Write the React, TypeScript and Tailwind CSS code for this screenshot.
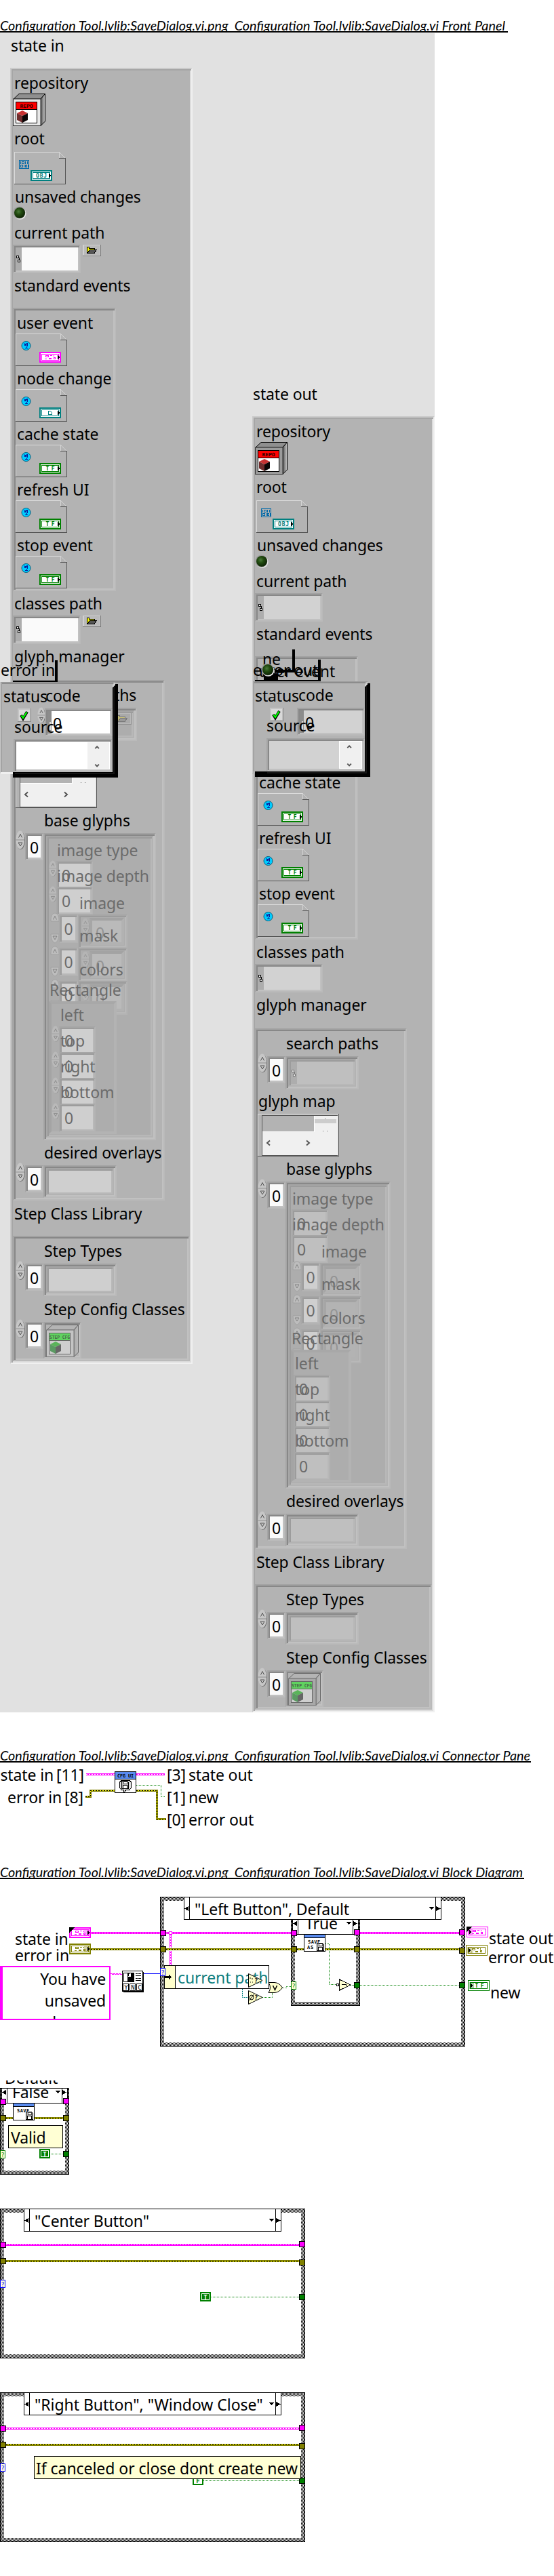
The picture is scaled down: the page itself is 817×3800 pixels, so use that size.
import React from 'react'

const SUNK =
  'border-2 border-t-[#a2a2a2] border-l-[#a5a5a5] border-r-[#bababa] border-b-[#bababa] p-[2px] shadow-[inset_2px_2px_0_#888888,inset_-2px_-2px_0_#c1c1c1]'
const SUNK_DIM =
  'border-2 border-t-[#a6a6a6] border-l-[#a8a8a8] border-r-[#b3b3b3] border-b-[#b3b3b3] p-[2px] shadow-[inset_2px_2px_0_#9c9c9c,inset_-2px_-2px_0_#b8b8b8]'

function Label({ children, className = '' }: { children: React.ReactNode; className?: string }) {
  return <div className={'h-8 shrink-0 whitespace-pre text-[23px] leading-8 ' + className}>{children}</div>
}

function Heading({ children, className }: { children: React.ReactNode; className: string }) {
  return (
    <h2
      className={
        "overflow-x-visible overflow-y-clip whitespace-pre border-b-2 border-black font-['Lato','Liberation_Sans',sans-serif] text-[19.8px] italic leading-[22px] tracking-normal " +
        className
      }
    >
      {children}
    </h2>
  )
}

function Cube({ text, band, face, dim, right, left, top }: { text: string; band: string; face: string; dim?: boolean; right: string; left: string; top: string }) {
  const line = dim ? '#666' : '#000'
  return (
    <svg width="48" height="48" viewBox="0 0 48 48" className="block shrink-0">
      <defs>
        <linearGradient id={'cube' + text.length + face.slice(1)} x1="0" y1="0" x2="1" y2="0">
          <stop offset="0" stopColor={dim ? '#aaa' : '#555'} />
          <stop offset="1" stopColor={dim ? '#b8b8b8' : '#c8c8c8'} />
        </linearGradient>
      </defs>
      <path d="M1 8 L9 .5 H47.5 L41 8 Z" fill={dim ? '#b4b4b4' : '#8f8f8f'} stroke={line} />
      <path d="M41 8 L47.5 .5 V41 L41 47.5 Z" fill={'url(#cube' + text.length + face.slice(1) + ')'} stroke={line} />
      <rect x=".5" y="8" width="40.5" height="39.5" fill={face} stroke={dim ? '#777' : '#333'} />
      <rect x="4.5" y="12.5" width="31" height="31" fill={dim ? '#cfcfcf' : '#fff'} stroke={line} />
      <rect x="5" y="13" width="30" height="10" fill={band} />
      <path d="M5 23.5 H35" stroke={line} />
      <text x="20" y="20.5" textAnchor="middle" textLength={dim ? 30 : 19} lengthAdjust="spacingAndGlyphs" fontFamily="DejaVu Sans Mono" fontWeight="bold" fontSize="7" fill={dim ? '#4a6a4a' : '#300'}>
        {text}
      </text>
      <path d="M14 25 L22 29 L14 33 L6 29 Z" fill={top} />
      <path d="M6 29 L14 33 V43 L6 39 Z" fill={left} />
      <path d="M14 33 L22 29 V39 L14 43 Z" fill={right} />
    </svg>
  )
}

function RefBox({ kind }: { kind: 'obj' | 'evt' | 'node' | 'tf' }) {
  const color = kind === 'evt' ? '#f0f' : kind === 'tf' ? '#008000' : '#008080'
  const tx = kind === 'obj' ? 24 : 35
  return (
    <svg width="76" height="48" viewBox="0 0 76 48" className="block shrink-0" shapeRendering="crispEdges">
      <path d="M.5 47 V.5 H66" fill="none" stroke="#dcdcdc" />
      <path d="M66.5 0 V9 M66.5 .5 L75.5 9.5" fill="none" stroke="#d4d4d4" />
      <path d="M66 9.5 H75.5 V47.5 H0" fill="none" stroke="#555" />
      {kind === 'obj' ? (
        <g fill="none" stroke="#0068a8">
          <rect x="7.5" y="12.5" width="14" height="12" />
          <path d="M9.5 14 V18 M11.5 14.5 H14.5 V17.5 H11.5 Z M16.5 14 V18 M19.5 14 V18 M9.5 19.5 H12 V22.5 H9.5 Z M14.5 19 V23 M16 19.5 H18.5 V22.5 H16 Z M20 19 V23" />
        </g>
      ) : (
        <g>
          <circle cx="15.5" cy="18" r="6.5" fill="#00ccff" stroke="#006080" shapeRendering="auto" />
          <path d="M12.5 14.5 L17.5 18 M17.5 14 L13.5 18 M13.5 15 V17 M17.5 15 V18.5 M16 18.5 V21.5 M13.5 21.5 H18" fill="none" stroke="#0b1a9a" />
        </g>
      )}
      <rect x={tx} y="27" width="32" height="16" fill={color} />
      <rect x={tx + 2} y="29" width="28" height="12" fill="#fff" />
      <rect x={tx + 3.5} y="30.5" width="25" height="9" fill="#fff" stroke={color} />
      {kind === 'evt' && (
        <g fill="none" stroke={color}>
          <path d="M44.5 32.5 h4 v2 h-4z M51 32.5 h3 M56 32 v2" />
          <path d="M43 37 h3 M49 36.5 h4 M49 37.5 h4 M56.5 35.5 h2 v2 h-2z" />
        </g>
      )}
      {kind === 'node' && <path d="M48.5 32.5 H51.5 L53.5 34.5 V37.5 H48.5 Z" fill="none" stroke={color} />}
      {(kind === 'tf' || kind === 'obj') && (
        <text x={tx + 16} y="38" textAnchor="middle" fontFamily="DejaVu Sans Mono" fontWeight="bold" fontSize="8" fill={color} textLength={kind === 'obj' ? 16 : 13}>
          {kind === 'obj' ? 'OBJ' : 'TF'}
        </text>
      )}
      <path d={`M${tx + 27} 32 V38 L${tx + 30} 35 Z`} fill="#000" />
    </svg>
  )
}

function Led() {
  return (
    <svg width="20" height="20" viewBox="0 0 20 20" className="block shrink-0">
      <defs>
        <radialGradient id="led" cx=".4" cy=".38" r=".6">
          <stop offset="0" stopColor="#4a7a3a" />
          <stop offset=".45" stopColor="#224c10" />
          <stop offset="1" stopColor="#0f2606" />
        </radialGradient>
      </defs>
      <circle cx="10.6" cy="10.8" r="9" fill="#e6e6e6" />
      <circle cx="9.4" cy="9.6" r="9" fill="#9d9d9d" />
      <circle cx="10" cy="10" r="8" fill="url(#led)" />
    </svg>
  )
}

function FolderButton({ dim }: { dim?: boolean }) {
  return (
    <svg width="27" height="17" viewBox="0 0 27 17" className="block shrink-0" shapeRendering="crispEdges">
      <rect width="27" height="17" fill={dim ? '#8f8f8f' : '#777'} />
      <rect width="26" height="16" fill={dim ? '#b9b9b9' : '#cfcfcf'} />
      <rect x="2" y="1" width="23" height="14" fill={dim ? '#aaa' : '#bababa'} />
      <path d="M6.5 12 V3.5 H9.5 V5.5 H17.5 V7.5" fill={dim ? '#c9c27a' : '#ff0'} stroke={dim ? '#777' : '#000'} />
      <path d="M7 12.5 L10.5 7.5 H20.5 L17 12.5 Z" fill={dim ? '#999' : '#555'} stroke={dim ? '#777' : '#000'} />
    </svg>
  )
}

function PathGlyph({ dim }: { dim?: boolean }) {
  return (
    <svg width="9" height="12" viewBox="0 0 9 12" className="block shrink-0" shapeRendering="crispEdges">
      <path d="M1.5 1.5 h3 v3 h-3z M3.5 7.5 h3 v3 h-3z M5 3.5 V7" fill="#e8e8e8" stroke={dim ? '#777' : '#000'} />
    </svg>
  )
}

function PathField({ out }: { out?: boolean }) {
  return (
    <div className="mt-[2px] flex h-[42px] shrink-0 items-start">
      <div className={'flex h-[42px] w-[100px] items-stretch ' + SUNK}>
        <div className="flex w-[9px] items-center bg-[#adadad]">
          <PathGlyph />
        </div>
        <div className={'flex-1 ' + (out ? 'bg-[#d2d2d2]' : 'bg-[#fafafa]')} />
      </div>
      {!out && (
        <div className="ml-[3px]">
          <FolderButton />
        </div>
      )}
    </div>
  )
}

function Spinner({ className = '', dim }: { className?: string; dim?: boolean }) {
  return (
    <svg viewBox="0 0 14 28" preserveAspectRatio="none" className={'block shrink-0 ' + className}>
      <ellipse cx="7.5" cy="14.6" rx="6.4" ry="13.2" fill={dim ? '#949494' : '#666'} />
      <ellipse cx="6.8" cy="13.8" rx="6.4" ry="13.3" fill={dim ? '#b9b9b9' : '#c6c6c6'} />
      <path d="M.5 14 H13" stroke={dim ? '#a2a2a2' : '#8f8f8f'} />
      <path d="M4.5 10.5 L7 5.5 L9.5 10.5 M4 18 H10 L7 23 Z" fill="none" stroke={dim ? '#858585' : '#555'} />
    </svg>
  )
}

function TallSpinner({ className }: { className: string }) {
  return (
    <svg width="14" height="46" viewBox="0 0 14 46" className={'block ' + className}>
      <path d="M1 13 Q1 1 7 1 Q13 1 13 13 Z M1 32 H13 Q12 44 7 45 Q2 44 1 32 Z" fill="#bdbdbd" stroke="#999" strokeWidth=".6" />
      <path d="M4.5 10.5 L7 5.5 L9.5 10.5 M4 35 H10 L7 40 Z" fill="none" stroke="#828282" />
    </svg>
  )
}

function ArrayRow({ className, children }: { className: string; children: React.ReactNode }) {
  return (
    <div className={'flex shrink-0 items-start ' + className}>
      <Spinner className="-mt-1 h-7 w-[14px]" />
      <div className={'h-10 w-[27px] ' + SUNK}>
        <div className="h-[32px] bg-[#fafafa] text-center text-[23px] leading-[34px]">0</div>
      </div>
      {children}
    </div>
  )
}

function Frame({ className, dim, children }: { className: string; dim?: boolean; children?: React.ReactNode }) {
  return (
    <div className={SUNK + ' ' + className}>
      <div className={'h-full ' + (dim ? SUNK_DIM : SUNK)}>{children}</div>
    </div>
  )
}

function DimNumber({ out }: { out?: boolean }) {
  return (
    <div className="-mb-1 flex h-[42px] items-start">
      {!out && <Spinner dim className="-mt-px h-[24px] w-[12px]" />}
      <div className={'-ml-px h-[42px] w-[54px] ' + SUNK_DIM}>
        <div className={'h-[34px] pl-1 text-[23px] leading-[35px] ' + (out ? 'bg-[#bfbfbf]' : 'bg-[#cfcfcf]')}>0</div>
      </div>
    </div>
  )
}

function DimArrayRow({ out }: { out?: boolean }) {
  return (
    <div className="-mb-px flex h-[50px] items-start">
      <TallSpinner className="-mt-[3px]" />
      <div className={'-ml-px h-[42px] w-[28px] ' + SUNK_DIM}>
        <div className="h-[34px] bg-[#cfcfcf] text-center text-[23px] leading-[35px]">0</div>
      </div>
      <div className={'h-[50px] ' + (out ? 'w-[61px] ' : 'w-[73px] ') + SUNK_DIM}>
        <div className="flex h-full items-start p-[1px]">
          {!out && <Spinner dim className="h-[24px] w-[12px] opacity-60" />}
          <div className="flex-1 border-4 border-t-[#a3a3a3] border-l-[#a6a6a6] border-r-[#b2b2b2] border-b-[#b2b2b2]">
            <div className={'h-[32px] pl-[5px] text-[23px] leading-[37px] text-[#939393] ' + (out ? 'bg-[#b3b3b3]' : 'bg-[#bababa]')}>0</div>
          </div>
        </div>
      </div>
    </div>
  )
}

function BaseGlyphs({ out }: { out?: boolean }) {
  const lx = out ? 'left-[2px]' : 'left-[12px]'
  const rl = out ? 'left-[6px]' : 'left-[17px]'
  return (
    <div className="relative h-full bg-[#adadad] text-[#6b6b6b]">
      <div className={'flex flex-col pt-[33px] ' + (out ? 'pl-[2px]' : '')}>
        <DimNumber out={out} />
        <DimNumber out={out} />
      </div>
      <div className="flex flex-col pl-[2px] pt-[3px]">
        <DimArrayRow out={out} />
        <DimArrayRow out={out} />
        <DimArrayRow out={out} />
      </div>
      <Label className={'absolute top-px ' + lx}>image type</Label>
      <Label className={'absolute top-[39px] ' + lx}>image depth</Label>
      <Label className="absolute left-[45px] top-[79px]">image</Label>
      <Label className="absolute left-[45px] top-[127px]">mask</Label>
      <Label className="absolute left-[45px] top-[177px]">colors</Label>
      <div
        className={
          'absolute left-0 top-[240px] flex h-[196px] flex-col border-4 border-t-[#a8a8a8] border-l-[#a4a4a4] border-r-[#b3b3b3] border-b-[#b3b3b3] bg-[#adadad] pt-[33px] ' +
          (out ? 'w-[89px] pl-px' : 'w-[100px]')
        }
      >
        <DimNumber out={out} />
        <DimNumber out={out} />
        <DimNumber out={out} />
        <DimNumber out={out} />
      </div>
      <Label className="absolute left-[1px] top-[207px]">Rectangle</Label>
      <Label className={'absolute top-[244px] ' + rl}>left</Label>
      <Label className={'absolute top-[282px] ' + rl}>top</Label>
      <Label className={'absolute top-[320px] ' + rl}>right</Label>
      <Label className={'absolute top-[358px] ' + rl}>bottom</Label>
    </div>
  )
}

function GlyphMap() {
  return (
    <svg width="120" height="63" viewBox="0 0 120 63" className="mt-[3px] block shrink-0" shapeRendering="crispEdges">
      <rect width="120" height="63" fill="#555" />
      <rect width="119" height="62" fill="#dedede" />
      <rect x="1" y="1" width="117" height="61" fill="#b3b3b3" />
      <rect x="6" y="2" width="112" height="60" fill="#555" />
      <rect x="7" y="3" width="111" height="58" fill="#f0f0f0" />
      <rect x="7" y="3" width="76" height="23" fill="#b3b3b3" />
      <path d="M83.5 3 V26.5 H7" stroke="#fff" fill="none" />
      <rect x="84" y="8" width="32" height="6" fill="#cdcdcd" />
      <path d="M99 7 h1 v1 h-1z M96 25 h1 v1 h-1z M102 25 h1 v1 h-1z" fill="#555" />
      <path d="M18 39.5 L14 43 L18 46.5 M72 39.5 L76 43 L72 46.5" fill="none" stroke="#555" strokeWidth="2" shapeRendering="auto" />
    </svg>
  )
}

function StateCluster({ out, className }: { out?: boolean; className: string }) {
  return (
    <div
      className={
        'absolute flex h-[1912px] w-[269px] flex-col border-2 border-l-[#cacaca] border-t-[#cacaca] border-r-[#f0f0f0] border-b-[#f0f0f0] bg-[#b3b3b3] p-[2px] shadow-[inset_2px_2px_0_#a6a6a6,inset_-2px_-2px_0_#dddddd] ' +
        className
      }
    >
      <Label className="mt-[2px] pl-[2px]">repository</Label>
      <Cube text="REPO" band="#ff0000" face={out ? '#9b9b9b' : '#e8e8e8'} top="#c83232" left="#6e2d2d" right="#0a0505" />
      <Label className="mt-[2px] pl-[2px]">root</Label>
      <div className="mt-1 pl-[2px]">
        <RefBox kind="obj" />
      </div>
      <Label className="mt-[2px] pl-[3px]">unsaved changes</Label>
      <div className="-mt-[2px]">
        <Led />
      </div>
      <Label className="mt-[3px] pl-[2px]">current path</Label>
      <PathField out={out} />
      <Label className="mt-[2px] pl-[2px]">standard events</Label>
      <div className={'mt-[17px] flex h-[418px] w-[152px] shrink-0 flex-col gap-[2px] ' + SUNK}>
        <div className="mt-[2px]">
          <Label className="pl-[2px]">user event</Label>
          <RefBox kind="evt" />
        </div>
        <div>
          <Label className="pl-[2px]">node change</Label>
          <RefBox kind="node" />
        </div>
        <div>
          <Label className="pl-[2px]">cache state</Label>
          <RefBox kind="tf" />
        </div>
        <div>
          <Label className="pl-[2px]">refresh UI</Label>
          <RefBox kind="tf" />
        </div>
        <div>
          <Label className="pl-[2px]">stop event</Label>
          <RefBox kind="tf" />
        </div>
      </div>
      <Label className="mt-[2px] pl-[2px]">classes path</Label>
      <PathField out={out} />
      <Label className="mt-[2px] pl-[2px]">glyph manager</Label>
      <div className={'mt-[19px] flex h-[768px] w-[224px] shrink-0 flex-col ' + SUNK}>
        <Label className="mt-[2px] pl-[42px]">search paths</Label>
        <ArrayRow className="mt-[3px] h-[49px]">
          <Frame dim className={'h-[49px] ' + (out ? 'w-[108px]' : 'w-[138px]')}>
            <div className="flex h-full items-start bg-[#bfbfbf]">
              <div className="flex h-full w-[9px] items-center bg-[#adadad]">
                <PathGlyph dim />
              </div>
              <div className="flex-1" />
              {!out && (
                <div className="h-full bg-[#adadad]">
                  <FolderButton dim />
                </div>
              )}
            </div>
          </Frame>
        </ArrayRow>
        <Label className="mt-px pl-px">glyph map</Label>
        <GlyphMap />
        <Label className="mt-[2px] pl-[42px]">base glyphs</Label>
        <ArrayRow className="mt-[3px] h-[453px]">
          <Frame dim className={'h-[453px] ' + (out ? 'w-[155px]' : 'w-[166px]')}>
            <BaseGlyphs out={out} />
          </Frame>
        </ArrayRow>
        <Label className="mt-[2px] pl-[42px]">desired overlays</Label>
        <ArrayRow className="mt-[3px] h-[48px]">
          <Frame dim className="h-[48px] w-[108px]">
            <div className={'h-full ' + (out ? 'bg-[#bfbfbf]' : 'bg-[#cfcfcf]')} />
          </Frame>
        </ArrayRow>
      </div>
      <Label className="mt-[3px] pl-[2px]">Step Class Library</Label>
      <div className={'mt-[17px] flex h-[185px] w-[261px] shrink-0 flex-col ' + SUNK}>
        <Label className="mt-[2px] pl-[42px]">Step Types</Label>
        <ArrayRow className="mt-[3px] h-[48px]">
          <Frame dim className="h-[48px] w-[108px]">
            <div className={'h-full ' + (out ? 'bg-[#bfbfbf]' : 'bg-[#cfcfcf]')} />
          </Frame>
        </ArrayRow>
        <Label className="mt-[3px] pl-[42px]">Step Config Classes</Label>
        <ArrayRow className="mt-[3px] h-[54px]">
          <div className={'h-[54px] w-[56px] ' + SUNK}>
            <Cube text="STEP CFG" dim band="#5fd35f" face={out ? '#a8a8a8' : '#c4c4c4'} top="#5ab45a" left="#5a9a62" right="#666" />
          </div>
        </ArrayRow>
      </div>
    </div>
  )
}

function ErrorCluster({ out, className }: { out?: boolean; className: string }) {
  return (
    <div className={'absolute h-[142px] w-[174px] ' + className}>
      <svg width="174" height="142" viewBox="0 0 174 142" className="absolute inset-0" shapeRendering="crispEdges">
        <path d={out ? 'M166 3 h8 V141 H4 v-8 H166z' : 'M166 3 h8 V141 H19 v-8 H166z'} fill="#000" />
        <path d="M168 6 V135 H22" stroke="#161616" strokeWidth="2" fill="none" />
        <rect width={out ? 4 : 19} height="136" fill={out ? '#b3b3b3' : '#efefef'} />
        <path d="M0 0 H170 L166 4 V133 H0 Z" fill="#b3b3b3" />
        <path d="M0 .5 H170" stroke="#9d9d9d" />
        <path d="M2 2 H167" stroke="#8c8c8c" strokeWidth="2" />
        <path d="M.5 0 V135" stroke="#c9c9c9" />
        <path d="M2 1 V133" stroke="#a3a3a3" strokeWidth="2" />
        <path d="M166 4 L170 0 V5 L166 8Z" fill="#d0d0d0" />
      </svg>
      <div className="absolute inset-0">
        <div className={'flex pt-[5px] ' + (out ? 'pl-[4px]' : 'pl-[5px]')}>
          <Label className={out ? 'w-[64px]' : 'w-[62px]'}>status</Label>
          <Label className="-mt-px">code</Label>
        </div>
        <svg width="20" height="20" viewBox="0 0 20 20" className="absolute left-[26px] top-[39px]">
          <rect width="20" height="20" fill="#888" />
          <rect width="19" height="19" fill="#c4c4c4" />
          <rect x="2" y="2" width="16" height="16" fill="#d9d9d9" />
          <path d="M5 10 L8 15 L14 5" fill="none" stroke="#000" strokeWidth="4" />
          <path d="M5.5 10.5 L8 14 L13.5 5.5" fill="none" stroke="#0f0" strokeWidth="2.2" />
        </svg>
        {!out && <Spinner className="absolute left-[55px] top-[37px] h-[24px] w-[12px]" />}
        <div className={'absolute left-[66px] top-[39px] flex h-[41px] w-[100px] ' + SUNK}>
          <div className="w-[6px] bg-[#8c8c8c] pt-4 pl-[3px]">
            <div className="h-3 w-[2px] bg-[#dddddd]" />
          </div>
          <div className={'h-[33px] flex-1 pl-[2px] text-[23px] leading-[37px] ' + (out ? 'bg-[#d2d2d2]' : 'bg-white')}>0</div>
        </div>
        <div className={'absolute top-[84px] flex h-[49px] justify-end ' + SUNK + (out ? ' left-[21px] w-[145px] ' : ' left-[20px] w-[146px] ')}>
          <div className={'flex-1 ' + (out ? 'bg-[#d2d2d2]' : 'bg-white')} />
          <svg width="34" height="41" viewBox="0 0 34 41" className="border border-white bg-[#f0f0f0]">
            <path d="M12 9.5 L15 6.5 L18 9.5 M12 34.5 L15 37.5 L18 34.5" fill="none" stroke="#555" strokeWidth="2" />
          </svg>
        </div>
        <Label className={'absolute left-[21px] ' + (out ? 'top-[49px]' : 'top-[50px]')}>source</Label>
      </div>
    </div>
  )
}

function FrontPanel() {
  return (
    <section className="relative h-[2477px] w-[641px] overflow-hidden bg-[#e1e1e1]">
      <Label className="absolute left-[16px] top-[2px]">state in</Label>
      <StateCluster className="left-[15px] top-[51px]" />
      <Label className="absolute left-[373px] top-[516px]">state out</Label>
      <StateCluster out className="left-[372px] top-[565px]" />

      <Label className="absolute left-px top-[923px]">error in</Label>
      <div className="absolute left-[19px] top-[925px] h-[34px] w-[66px] border-b-4 border-r-4 border-black" />
      <ErrorCluster className="left-0 top-[957px]" />

      <Label className="absolute left-[387px] top-[907px]">ne</Label>
      <div className="absolute left-[405px] top-[909px] h-[34px] w-[30px] border-b-4 border-r-4 border-black" />
      <div className="absolute left-[389px] top-[945px] h-[12px] w-[21px] bg-black" />
      <Label className="absolute left-[373px] top-[923px]">error out</Label>
      <div className="absolute left-[385px] top-[929px]">
        <Led />
      </div>
      <div className="absolute left-[376px] top-[924px] h-[34px] w-[97px] border-b-4 border-r-4 border-black" />
      <ErrorCluster out className="left-[372px] top-[956px]" />
    </section>
  )
}

function PinkWire({ d }: { d: string }) {
  return (
    <g fill="none">
      <path d={d} stroke="#f0f" strokeWidth="3" />
      <path d={d} stroke="#fff" strokeDasharray="2 2" />
    </g>
  )
}

function ErrorWire({ d }: { d: string }) {
  return (
    <g fill="none">
      <path d={d} stroke="#808000" strokeWidth="3" />
      <path d={d} stroke="#ff0" />
      <path d={d} stroke="#000" strokeDasharray="2 2" />
    </g>
  )
}

function BoolWire({ d }: { d: string }) {
  return <path d={d} fill="none" stroke="#008000" strokeDasharray="1 1" />
}

function Tunnel({ x, y, c }: { x: number; y: number; c: string }) {
  return <rect x={x + 0.5} y={y - 3.5} width="8" height="8" fill={c} stroke="#000" />
}

function Disk({ x, y }: { x: number; y: number }) {
  return (
    <g transform={`translate(${x} ${y})`}>
      <path d="M.5 .5 H8.5 L10.5 2.5 V11.5 H.5 Z" fill="#b8b8b8" stroke="#000" />
      <rect x="3" y="1" width="5" height="3" fill="#fff" stroke="#000" strokeWidth=".6" />
      <rect x="2.5" y="6.5" width="6" height="5" fill="#fff" stroke="#000" />
    </g>
  )
}

function CaseBox({ x, y, w, h }: { x: number; y: number; w: number; h: number }) {
  return (
    <g>
      <rect x={x} y={y} width={w} height={h} fill="#000" />
      <rect x={x + 1} y={y + 1} width={w - 2} height={h - 2} fill="url(#hatch)" />
      <rect x={x + 6} y={y + 6} width={w - 12} height={h - 12} fill="#fff" />
    </g>
  )
}

function Selector({ x, y }: { x: number; y: number }) {
  return (
    <g transform={`translate(${x} ${y})`}>
      <rect x="35.5" y=".5" width="379" height="33" fill="#fff" stroke="#000" />
      <path d="M43.5 0 V33 M406.5 0 V33" stroke="#000" />
      <path d="M42 14 V21 L36 17.5 Z M407 14 V21 L414 17.5 Z M397 15 H404 L400.5 19 Z" fill="#000" />
    </g>
  )
}

function QMark({ x, y, c }: { x: number; y: number; c: string }) {
  return (
    <g>
      <rect x={x + 0.5} y={y + 0.5} width="7" height="11" fill="#ffffd8" stroke={c} />
      <text x={x + 4} y={y + 9.5} textAnchor="middle" fontFamily="DejaVu Sans Mono" fontSize="9" fill={c}>
        ?
      </text>
    </g>
  )
}

function BoolConst({ x, y, t }: { x: number; y: number; t: string }) {
  return (
    <g>
      <rect x={x} y={y} width="16" height="14" fill="#008000" />
      {t === 'T' ? (
        <rect x={x + 2.5} y={y + 2.5} width="11" height="9" fill="#008000" stroke="#fff" />
      ) : (
        <rect x={x + 2} y={y + 2} width="12" height="10" fill="#fff" />
      )}
      <text x={x + 8} y={y + 10.5} textAnchor="middle" fontFamily="DejaVu Sans Mono" fontWeight="bold" fontSize="9" fill={t === 'T' ? '#fff' : '#008000'}>
        {t}
      </text>
    </g>
  )
}

function Terminal({ x, y, c, out, tf }: { x: number; y: number; c: string; out?: boolean; tf?: boolean }) {
  return (
    <g transform={`translate(${x} ${y})`}>
      <rect width="32" height="16" fill={c} />
      <rect x={out ? 1 : 2} y={out ? 1 : 2} width={out ? 30 : 28} height={out ? 14 : 12} fill="#fff" />
      <rect x="3.5" y="3.5" width="25" height="9" fill="#fff" stroke={c} />
      {tf ? (
        <text x="17" y="11" textAnchor="middle" fontFamily="DejaVu Sans Mono" fontWeight="bold" fontSize="8" fill={c} textLength="13">
          TF
        </text>
      ) : (
        <path d="M9.5 5.5 h4 v2 h-4z M16 5.5 h3 M21 5 v2 M8 10 h3 M14 9.5 h4 M14 10.5 h4 M21.5 8.5 h2 v2 h-2z" fill="none" stroke={c} />
      )}
      <rect x={out ? 2 : 22} y="3" width="7" height="10" fill={c} opacity=".35" />
      <path d={out ? 'M4 5 V11 L7 8 Z' : 'M27 5 V11 L30 8 Z'} fill="#000" />
    </g>
  )
}

function ConnectorPane() {
  return (
    <section className="relative flex h-[134px] items-start pt-[2px]">
      <svg width="817" height="134" viewBox="0 2600 817 134" className="absolute inset-0" shapeRendering="crispEdges">
        <PinkWire d="M127 2617.5 H243" />
        <ErrorWire d="M126 2650.5 H133.5 V2641.5 H231.5 V2683.5 H245" />
        <BoolWire d="M201 2633.5 H237.5 V2650.5 H243" />
        <rect x="169.5" y="2613.5" width="31" height="31" fill="#fff" stroke="#000" />
        <rect x="170" y="2614" width="30" height="10" fill="#5a8cf0" />
        <path d="M170 2624.5 H200" stroke="#000" />
        <text x="185" y="2621.5" textAnchor="middle" fontFamily="DejaVu Sans Mono" fontWeight="bold" fontSize="7" textLength="24" lengthAdjust="spacingAndGlyphs">
          CFG UI
        </text>
        <path d="M179 2626.5 H191 L193.5 2629 V2637 L191 2640.5 H186 L183 2644 L182 2640.5 H179 L176.5 2637 V2629 Z" fill="#e0e0e0" stroke="#000" />
        <Disk x={179} y={2627} />
      </svg>
      <div className="flex w-[124px] flex-col gap-px">
        <div className="flex justify-end gap-[4px]">
          <Label>state in</Label>
          <Label>[11]</Label>
        </div>
        <div className="flex justify-end gap-[4px] pr-px">
          <Label>error in</Label>
          <Label>[8]</Label>
        </div>
      </div>
      <div className="flex flex-col gap-px pl-[122px]">
        <div className="flex gap-[4px]">
          <Label>[3]</Label>
          <Label>state out</Label>
        </div>
        <div className="flex gap-[4px]">
          <Label>[1]</Label>
          <Label>new</Label>
        </div>
        <div className="flex gap-[4px]">
          <Label>[0]</Label>
          <Label>error out</Label>
        </div>
      </div>
    </section>
  )
}

const PINK = '#f0f'
const OLIVE = '#808000'
const GREEN = '#008000'

function SmallCase({ x, y, as }: { x: number; y: number; as?: boolean }) {
  return (
    <g>
      <CaseBox x={x} y={y} w={102} h={128} />
      <g transform={`translate(${x} ${y})`}>
        <ErrorWire d="M9 44.5 H93" />
        <rect x="19.5" y="16.5" width="31" height="31" fill="#fff" stroke="#000" />
        <rect x="20" y="22" width="30" height="5" fill="#5a8cf0" />
        <path d="M20 27.5 H50" stroke="#000" />
        <path d="M24 22.5 h3 m2 0 h3 m2 0 h3 m3 0 h2 m2 0 h2" stroke="#000" />
        <text x="34" y="35.5" textAnchor="middle" fontFamily="DejaVu Sans Mono" fontWeight="bold" fontSize="7" textLength="18">
          SAVE
        </text>
        {as && (
          <text x="24" y="43.5" fontFamily="DejaVu Sans Mono" fontWeight="bold" fontSize="7" textLength="9">
            AS
          </text>
        )}
        <Disk x={38} y={35} />
        <rect x="2.5" y=".5" width="97" height="22" fill="#fff" stroke="#000" />
        <path d="M10.5 0 V22 M91.5 0 V22" stroke="#000" />
        <path d="M9 3 V10 L3 6.5 Z M92 3 V10 L98 6.5 Z M82 4 H89 L85.5 8 Z" fill="#000" />
        <Tunnel x={0} y={20} c={PINK} />
        <Tunnel x={93} y={19} c={PINK} />
        <Tunnel x={0} y={44} c={OLIVE} />
        <Tunnel x={93} y={44} c={OLIVE} />
        <Tunnel x={93} y={97} c={GREEN} />
        <QMark x={0} y={92} c={GREEN} />
      </g>
    </g>
  )
}

function BigCase({ x, y }: { x: number; y: number }) {
  return (
    <g>
      <CaseBox x={x} y={y} w={450} h={221} />
      <g transform={`translate(${x} ${y})`}>
        <PinkWire d="M9 53.5 H441" />
        <ErrorWire d="M9 77.5 H441" />
        <Tunnel x={0} y={53} c={PINK} />
        <Tunnel x={441} y={52} c={PINK} />
        <Tunnel x={0} y={77} c={OLIVE} />
        <Tunnel x={441} y={79} c={OLIVE} />
        <Tunnel x={441} y={130} c={GREEN} />
      </g>
    </g>
  )
}

function BlockDiagram() {
  return (
    <section className="relative h-[1028px]">
      <svg width="817" height="1028" viewBox="0 2772 817 1028" className="absolute inset-0" shapeRendering="crispEdges">
        <defs>
          <pattern id="hatch" width="2" height="2" patternUnits="userSpaceOnUse">
            <rect width="2" height="2" fill="#fff" />
            <path d="M0 0 h1 v1 h-1z M1 1 h1 v1 h-1z" fill="#000" />
          </pattern>
        </defs>
        <BigCase x={236} y={2798} />
        <PinkWire d="M134 2851.5 H236" />
        <ErrorWire d="M134 2875.5 H236" />
        <PinkWire d="M251.5 2899 V2878" />
        <PinkWire d="M251.5 2873 V2852" />
        <circle cx="251.5" cy="2851.5" r="2.5" fill="#fff" stroke={PINK} />
        <SmallCase x={429} y={2831} as />
        <Selector x={236} y={2798} />
        <BoolWire d="M480 2867.5 H485.5 V2927.5 H496" />
        <circle cx="498" cy="2928" r="2" fill="#fff" stroke="#000" />
        <path d="M500.5 2920 V2936 L517 2928 Z" fill="#ffffd0" stroke="#000" />
        <path d="M504 2927 h6 v3" fill="none" stroke="#000" />
        <BoolWire d="M517 2928.5 H522" />
        <BoolWire d="M531 2928.5 H677" />
        <Terminal x={102} y={2843} c={PINK} />
        <path d="M102 2843 H110 L102 2852 Z" fill="#000" />
        <Terminal x={102} y={2867} c={OLIVE} />
        <Terminal x={688} y={2842} c={PINK} out />
        <path d="M688 2842 H696 L688 2851 Z" fill="#000" />
        <Terminal x={687} y={2869} c={OLIVE} out />
        <Terminal x={690} y={2921} c={GREEN} out tf />
        <path d="M163 2911.5 h2 v1 h2 v-1 h2 v1 h2 v-1 h2 v1 h2 v-1 h2 v1 h3" fill="none" stroke={PINK} />
        <rect x="182" y="2909" width="30" height="30" fill="#000" />
        <rect x="180.5" y="2907.5" width="30" height="30" fill="#fff" stroke="#000" />
        <rect x="182.5" y="2910.5" width="15" height="13" fill="#fff" stroke="#000" />
        <path d="M188 2911 h3 l-2 5 h4 v-5 h4 v12 h-9z" fill="#000" />
        <path d="M200 2911.5 h3 m1 0 h4 M200 2914.5 h8 M200 2918.5 h3 m1 0 h4 M200 2921.5 h8" stroke="#000" />
        <g fill="#fff" stroke="#000">
          <rect x="181.5" y="2926.5" width="8" height="10" />
          <rect x="191.5" y="2926.5" width="8" height="10" />
          <rect x="201.5" y="2926.5" width="8" height="10" />
        </g>
        <g fontFamily="DejaVu Sans Mono" fontSize="9" textAnchor="middle">
          <text x="186" y="2935">Y</text>
          <text x="196" y="2935">N</text>
          <text x="206" y="2935">C</text>
        </g>
        <path d="M212 2911.5 H237" stroke="#00f" />
        <rect x="242.5" y="2899.5" width="154" height="34" fill="#fff" stroke="#000" />
        <rect x="242.5" y="2899.5" width="16" height="34" fill="#ffffcc" stroke="#000" />
        <path d="M243 2915 h6 v-3 l4 4.5 l-4 4.5 v-3 h-6z" fill="#000" />
        <QMark x={236} y={2903} c="#0000ff" />

        <SmallCase x={0} y={3080} />
        <rect x="12.5" y="3135.5" width="80" height="33" fill="#ffffd4" stroke="#000" />
        <BoolConst x={58} y={3170} t="T" />
        <BoolWire d="M75 3177.5 H92" />

        <BigCase x={0} y={3258} />
        <Selector x={0} y={3258} />
        <QMark x={0} y={3363} c="#0000ff" />
        <BoolConst x={295} y={3381} t="T" />
        <BoolWire d="M312 3388.5 H441" />

        <BigCase x={0} y={3529} />
        <Selector x={0} y={3529} />
        <QMark x={0} y={3634} c="#0000ff" />
        <BoolConst x={284} y={3652} t="F" />
        <BoolWire d="M300 3659.5 H441" />
        <rect x="50.5" y="3623.5" width="393" height="33" fill="#ffffd4" stroke="#000" />
      </svg>

      <Label className="absolute left-[22px] top-[72px]">state in</Label>
      <Label className="absolute left-[22px] top-[96px]">error in</Label>
      <Label className="absolute left-[721px] top-[71px]">state out</Label>
      <Label className="absolute left-[720px] top-[99px]">error out</Label>
      <Label className="absolute left-[723px] top-[151px]">new</Label>
      <Label className="absolute left-[287px] top-[28px]">"Left Button", Default</Label>
      <div className="absolute left-[448px] top-[60px] h-[21px] w-[60px] overflow-hidden">
        <Label className="-mt-[11px] pl-[2px]">True</Label>
      </div>
      <div className="absolute left-0 top-[128px] h-[80px] w-[163px] overflow-hidden border-2 border-l-4 border-[#ff00ff] bg-white pr-[5px] pt-px text-right">
        <Label>You have</Label>
        <Label>unsaved</Label>
        <Label>changes</Label>
      </div>
      <Label className="absolute left-[262px] top-[129px] text-[#108080]">current path</Label>

      <svg width="80" height="64" viewBox="354 2904 80 64" className="absolute left-[354px] top-[132px]">
        <path d="M357.5 2934 V2946.5 H366" fill="none" stroke="#008080" strokeDasharray="2 1" />
        <path d="M387 2946.5 H401.5 V2939 M416 2932.5 H422.5 V2930.5 H430" fill="none" stroke="#008000" strokeDasharray="1 1" />
        <g fill="#ffffcc" stroke="#000">
          <path d="M366.5 2911.5 L387 2921.5 L366.5 2931.5 Z" />
          <path d="M366.5 2936.5 L387 2946.5 L366.5 2956.5 Z" />
          <path d="M396 2924.5 H405 Q412 2925 416.5 2932 Q412 2939 405 2939.5 H396 Q401 2932 396 2924.5 Z" />
        </g>
        <path d="M402.5 2929 L405.5 2935.5 L408.5 2929" fill="none" stroke="#000" strokeWidth="1.5" />
        <path d="M369 2917 v2 m3 -1 v2 M369 2924 h1 m2 0 h1" stroke="#000" />
        <ellipse cx="371" cy="2946.5" rx="2.8" ry="3.5" fill="none" stroke="#000" />
        <path d="M367.5 2951 L374.5 2942" stroke="#000" />
        <g fontFamily="DejaVu Sans Mono" fontSize="9" fontWeight="bold">
          <text x="375" y="2925">?</text>
          <text x="375" y="2950">?</text>
        </g>
      </svg>

      <div className="absolute left-[7px] top-[297px] h-[6px] w-[90px] overflow-hidden">
        <Label className="-mt-[20px]">Default</Label>
      </div>
      <div className="absolute left-[18px] top-[309px] h-[21px] w-[60px] overflow-hidden">
        <Label className="-mt-[11px]">False</Label>
      </div>
      <Label className="absolute left-[16px] top-[365px]">Valid</Label>
      <Label className="absolute left-[51px] top-[488px]">"Center Button"</Label>
      <Label className="absolute left-[51px] top-[759px] tracking-[-0.05px]">"Right Button", "Window Close"</Label>
      <Label className="absolute left-[53px] top-[853px] tracking-[-0.05px]">If canceled or close dont create new</Label>
    </section>
  )
}

export default function App() {
  return (
    <main className="flex h-[3800px] w-[817px] flex-col items-start overflow-hidden bg-white font-['Noto_Sans','Open_Sans',sans-serif] tracking-[-0.13px] text-black [&>section]:w-full [&>section:first-of-type]:w-[641px]">
      <Heading className="mb-px mt-[26px] h-[22px] w-[749px]">
        {'Configuration Tool.lvlib:SaveDialog.vi.png  Configuration Tool.lvlib:SaveDialog.vi Front Panel'}
      </Heading>
      <FrontPanel />
      <Heading className="mt-[52px] h-[22px] w-[783px]">
        {'Configuration Tool.lvlib:SaveDialog.vi.png  Configuration Tool.lvlib:SaveDialog.vi Connector Pane'}
      </Heading>
      <ConnectorPane />
      <Heading className="mt-[16px] h-[22px] w-[773px]">
        {'Configuration Tool.lvlib:SaveDialog.vi.png  Configuration Tool.lvlib:SaveDialog.vi Block Diagram'}
      </Heading>
      <BlockDiagram />
    </main>
  )
}
